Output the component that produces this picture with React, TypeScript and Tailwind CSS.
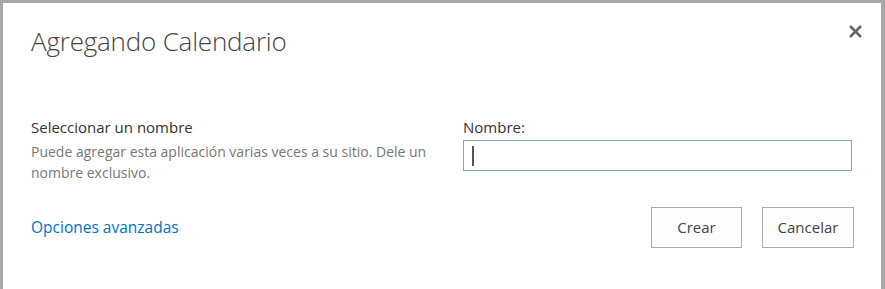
export default function App() {
  return (
    <div className="h-[289px] w-[885px] bg-[#a8a8a8] pl-[3px] pt-[3px] font-['Open_Sans',sans-serif]">
      <div className="flex h-full w-[878px] flex-col bg-white pl-[28px] pr-[27px]">
        <div className="flex items-start justify-between pt-[18px]">
          <h1 className="text-[26px] font-light leading-[40px] tracking-[-0.2px] text-[#444]">
            Agregando Calendario
          </h1>
          <button className="mr-[-9px] mt-[2px] flex h-[16px] w-[16px] items-center justify-center text-[#666]">
            <svg width="15" height="15" viewBox="0 0 15 15">
              <path d="M2 2 L13 13 M13 2 L2 13" stroke="currentColor" strokeWidth="2.6" strokeLinecap="butt" />
            </svg>
          </button>
        </div>

        <div className="mt-[56px] flex">
          <div className="w-[432px] pr-[16px]">
            <p className="text-[15px] leading-[20px] text-[#333]">Seleccionar un nombre</p>
            <p className="mt-[4px] text-[14px] leading-[21px] text-[#777]">
              Puede agregar esta aplicación varias veces a su sitio. Dele un nombre exclusivo.
            </p>
          </div>
          <div className="flex-1">
            <label className="block text-[15px] leading-[20px] text-[#333]">Nombre:</label>
            <div className="mt-[3px] flex h-[31px] w-[389px] items-center border border-[#7aa7cf] px-[8px]">
              <div className="h-[20px] w-[2px] bg-[#555]" />
            </div>
          </div>
        </div>

        <div className="mt-[24px] flex items-center justify-between">
          <a className="text-[15.5px] text-[#0072c6]">Opciones avanzadas</a>
          <div className="flex gap-[20px]">
            <button className="h-[41px] w-[91px] border border-[#ababab] bg-[#fdfdfd] text-[15px] text-[#444]">
              Crear
            </button>
            <button className="h-[41px] w-[92px] border border-[#ababab] bg-[#fdfdfd] text-[15px] text-[#444]">
              Cancelar
            </button>
          </div>
        </div>
      </div>
    </div>
  );
}
